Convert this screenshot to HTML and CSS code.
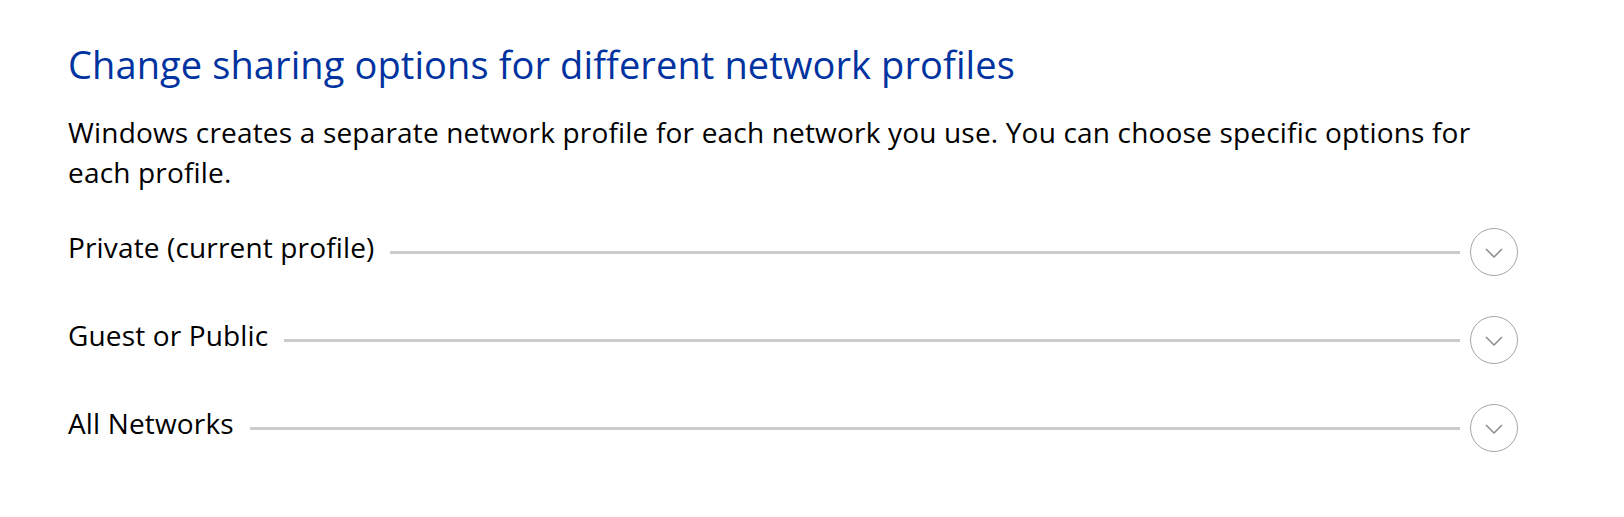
FILE: index.html
```html
<!DOCTYPE html>
<html lang="en">
<head>
<meta charset="utf-8">
<title>Advanced sharing settings</title>
<link rel="stylesheet" href="styles.css">
</head>
<body>
<main class="page">
  <h1 class="title">Change sharing options for different network profiles</h1>
  <p class="intro">Windows creates a separate network profile for each network you use. You can choose specific options for each profile.</p>
  <div class="profiles">
    <div class="profile">
      <span class="label">Private (current profile)</span>
      <span class="rule"></span>
      <button class="toggle" aria-label="Expand">
        <svg viewBox="0 0 48 48" width="48" height="48"><circle cx="24" cy="24" r="23.5" fill="none" stroke="#a6a6a6" stroke-width="1"/><path d="M16 21 L24 29 L32 21" fill="none" stroke="#8a8a8a" stroke-width="1.5"/></svg>
      </button>
    </div>
    <div class="profile">
      <span class="label">Guest or Public</span>
      <span class="rule"></span>
      <button class="toggle" aria-label="Expand">
        <svg viewBox="0 0 48 48" width="48" height="48"><circle cx="24" cy="24" r="23.5" fill="none" stroke="#a6a6a6" stroke-width="1"/><path d="M16 21 L24 29 L32 21" fill="none" stroke="#8a8a8a" stroke-width="1.5"/></svg>
      </button>
    </div>
    <div class="profile">
      <span class="label">All Networks</span>
      <span class="rule"></span>
      <button class="toggle" aria-label="Expand">
        <svg viewBox="0 0 48 48" width="48" height="48"><circle cx="24" cy="24" r="23.5" fill="none" stroke="#a6a6a6" stroke-width="1"/><path d="M16 21 L24 29 L32 21" fill="none" stroke="#8a8a8a" stroke-width="1.5"/></svg>
      </button>
    </div>
  </div>
</main>
</body>
</html>
```

FILE: styles.css
```css
html, body {
  margin: 0;
  padding: 0;
  background: #ffffff;
}

body {
  font-family: "Segoe UI", "Open Sans", "Noto Sans", sans-serif;
  color: #000000;
}

.page {
  width: 1450px;
  padding: 40px 0 0 68px;
}

.title {
  margin: 0;
  font-size: 38px;
  line-height: 48px;
  font-weight: 400;
  color: #0033a0;
  letter-spacing: 0.1px;
}

.intro {
  margin: 24px 0 0 0;
  font-size: 28px;
  line-height: 40px;
  letter-spacing: 0.18px;
}

.profiles {
  display: flex;
  flex-direction: column;
  gap: 40px;
  margin-top: 36px;
}

.profile {
  display: flex;
  align-items: center;
  height: 48px;
}

.label {
  font-size: 28px;
  line-height: 38px;
  margin-bottom: 10px;
  letter-spacing: 0.15px;
  white-space: nowrap;
}

.rule {
  flex: 1;
  height: 3px;
  background: #cccccc;
  margin: 0 10px 0 16px;
}

.toggle {
  width: 48px;
  height: 48px;
  padding: 0;
  border: 0;
  background: none;
  display: block;
}

.toggle svg {
  display: block;
}
```
